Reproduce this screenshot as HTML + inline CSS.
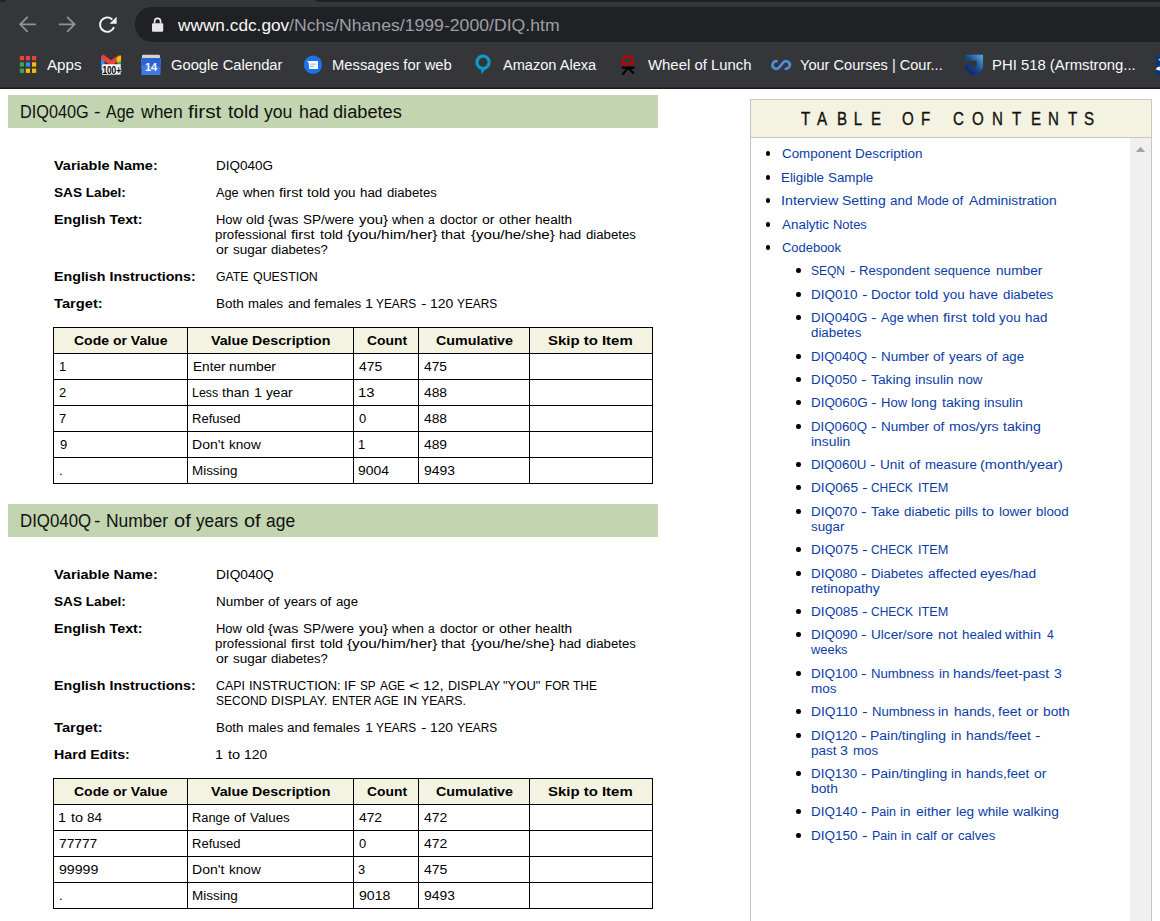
<!DOCTYPE html>
<html><head><meta charset="utf-8">
<style>
html,body{margin:0;padding:0;width:1160px;height:921px;overflow:hidden;background:#fff;font-family:"Liberation Sans",sans-serif;}
.t{position:absolute;white-space:nowrap;transform-origin:0 0;}
.abs{position:absolute;}
#chrome{position:absolute;left:0;top:0;width:1160px;height:89px;background:#35363a;}
#tabstrip{position:absolute;left:315px;top:0;width:845px;height:2px;background:#202124;border-bottom-left-radius:3px;}
#omni{position:absolute;left:135px;top:7px;width:1100px;height:34.5px;background:#202124;border-radius:17px;}
#shadow{position:absolute;left:0;top:87px;width:1160px;height:1px;background:#26272a;border-bottom:1px solid #1b1b1c;}
.green{position:absolute;left:8px;width:650px;height:33px;background:#c2d5b0;}
.tbl{position:absolute;left:53px;width:598px;border:1px solid #000;}
.hl{position:absolute;left:0;width:598px;height:1px;background:#000;}
.vl{position:absolute;top:0;width:1px;background:#000;}
.hdr{position:absolute;left:0;top:0;width:598px;height:25px;background:#f4f2e0;}
#toc{position:absolute;left:750px;top:99px;width:400px;height:830px;border:1px solid #c6c6c6;background:#fff;}
#tochead{position:absolute;left:0;top:0;width:400px;height:37px;background:#f4f2e0;border-bottom:1px solid #c6c6c6;}
#scroll{position:absolute;left:379px;top:38px;width:21px;height:800px;background:#f0f0f0;}
.bul{position:absolute;width:4.6px;height:4.6px;border-radius:50%;background:#000;}
.toct{position:absolute;top:109px;font-size:18px;line-height:20px;color:#111;white-space:nowrap;transform:scaleX(0.84);transform-origin:50% 0;-webkit-text-stroke:0.35px #111;}
</style></head><body>
<div id="chrome">
  <div id="tabstrip"></div>
  <div class="abs" style="left:0;top:0;width:6px;height:2px;background:#202124;border-bottom-right-radius:3px"></div>
  <div id="omni"></div>
  <svg class="abs" style="left:0;top:0" width="1160" height="89" viewBox="0 0 1160 89">
    <!-- back / forward -->
    <path d="M35.2 24.3H20.6M27.2 17.3L20.2 24.3L27.2 31.3" fill="none" stroke="#909194" stroke-width="1.8" stroke-linecap="round"/>
    <path d="M59.6 24.3H74.2M67.6 17.3L74.6 24.3L67.6 31.3" fill="none" stroke="#909194" stroke-width="1.8" stroke-linecap="round"/>
    <!-- reload -->
    <path d="M114.0 27.1A7.2 7.2 0 1 1 112.3 19.5" fill="none" stroke="#f1f3f4" stroke-width="1.9"/>
    <path d="M116.6 16.7V23.8H109.5Z" fill="#f1f3f4"/>
    <!-- lock -->
    <path d="M154.6 23.6V21.4a3 3 0 0 1 6 0v2.2" fill="none" stroke="#e8e8e8" stroke-width="1.6"/>
    <rect x="152" y="23.2" width="11.2" height="8.6" rx="1" fill="#e8e8e8"/>
    <!-- apps -->
    <g>
    <rect x="19.8" y="56" width="4.2" height="4.3" fill="#ea4335"/><rect x="25.8" y="56" width="4.2" height="4.3" fill="#ea4335"/><rect x="32" y="56" width="4.2" height="4.3" fill="#ea4335"/>
    <rect x="19.8" y="62.3" width="4.2" height="4.3" fill="#34a853"/><rect x="25.8" y="62.3" width="4.2" height="4.3" fill="#4285f4"/><rect x="32" y="62.3" width="4.2" height="4.3" fill="#fbbc04"/>
    <rect x="19.8" y="68.6" width="4.2" height="4.3" fill="#34a853"/><rect x="25.8" y="68.6" width="4.2" height="4.3" fill="#fbbc04"/><rect x="32" y="68.6" width="4.2" height="4.3" fill="#fbbc04"/>
    </g>
    <!-- gmail -->
    <clipPath id="gmc"><rect x="101" y="54.8" width="20.2" height="20"/></clipPath>
    <g clip-path="url(#gmc)">
    <path d="M101 58V70H104.6V61z" fill="#4285f4"/>
    <path d="M117.4 61V69H121.2V58z" fill="#34a853"/>
    <path d="M101.6 56.2L111.3 63.2L119.5 57.2" fill="none" stroke="#ea4335" stroke-width="4.6" stroke-linejoin="round"/>
    <path d="M116.4 58.4L119.4 55.6Q121.2 54.6 121.2 57V60.4L117.6 63z" fill="#fbbc04"/>
    </g>
    <rect x="102.3" y="64.2" width="18.3" height="10.4" fill="#f0f0f0"/>
    <text x="102.4" y="73.9" font-family="Liberation Sans" font-weight="bold" font-size="11.5" textLength="18.6" lengthAdjust="spacingAndGlyphs" fill="#000" stroke="#fff" stroke-width="1.2" paint-order="stroke">100+</text>
    <!-- calendar -->
    <rect x="142" y="54.8" width="18" height="3.6" rx="1.2" fill="#d6d3cc"/>
    <path d="M141 57.9H161L160.4 74.9H141.6z" fill="#3d7be6"/>
    <path d="M141.6 57.9H160.4V66.5L141.6 65z" fill="#2a62d4"/>
    <text x="151" y="71.2" font-family="Liberation Sans" font-weight="bold" font-size="11" text-anchor="middle" fill="#f4f6fb">14</text>
    <!-- messages -->
    <circle cx="313" cy="64.8" r="9.2" fill="#1a73e8"/>
    <path d="M306.9 61H318V69.1H309.3L308.6 62.6z" fill="#fff"/>
    <rect x="310" y="63.6" width="6.2" height="1.1" fill="#9cbff8"/><rect x="310" y="65.8" width="4.6" height="1.1" fill="#9cbff8"/>
    <!-- alexa -->
    <circle cx="483" cy="62.3" r="6.1" fill="none" stroke="#0d9ac9" stroke-width="3.2"/>
    <path d="M480.8 67.2L481.6 74.6L485.4 68.8z" fill="#0d9ac9"/>
    <!-- wheel of lunch -->
    <path d="M622.4 64.2C623 59.5 625 56.2 628.2 56.2S632.6 58.4 632.6 61.6V64.2z" fill="none" stroke="#c00000" stroke-width="2.2"/>
    <path d="M622.4 67.6H633.8M628 67.6L623.2 73.8M628 67.6L633.2 73" fill="none" stroke="#000" stroke-width="2.1" stroke-linecap="round"/>
    <!-- coursera -->
    <path d="M777.58 61.48A3.75 3.75 0 1 0 779.17 67.41L783.13 62.59A3.75 3.75 0 1 1 784.72 68.52" fill="none" stroke="#4d8fd6" stroke-width="2.7"/>
    <!-- PHI -->
    <defs><linearGradient id="g1" x1="0" y1="1" x2="1" y2="0"><stop offset="0" stop-color="#061a5c"/><stop offset="0.5" stop-color="#17488f"/><stop offset="1" stop-color="#5aaedd"/></linearGradient></defs>
    <path d="M965 54.8H983V67.8L977.8 74.8H970.2L965 67.8V64H970.4V64.6A3.2 3.2 0 0 0 976.8 64.6V60.6H965z" fill="url(#g1)"/>
    <rect x="1156" y="55" width="4" height="20" fill="#003a7d"/><path d="M1158.6 59.6Q1159.2 58.6 1160 58.8V60.6Q1159.2 60.2 1158.6 60.4z" fill="#dfe6ef"/><path d="M1156 68.6Q1157.6 66.4 1160 66.4V70.4Q1157.6 70.6 1156 69.6z" fill="#eef2f7"/>
  </svg>
  <div id="shadow"></div>
</div>

<div class="green" style="top:95px"></div>
<div class="green" style="top:504px"></div>

<!-- table 1 -->
<div class="tbl" style="top:327px;height:155px">
  <div class="hdr"></div>
  <div class="hl" style="top:25px"></div><div class="hl" style="top:51px"></div><div class="hl" style="top:77px"></div><div class="hl" style="top:103px"></div><div class="hl" style="top:129px"></div>
  <div class="vl" style="left:133px;height:155px"></div><div class="vl" style="left:299px;height:155px"></div><div class="vl" style="left:364px;height:155px"></div><div class="vl" style="left:475px;height:155px"></div>
</div>
<!-- table 2 -->
<div class="tbl" style="top:778px;height:129px">
  <div class="hdr"></div>
  <div class="hl" style="top:25px"></div><div class="hl" style="top:51px"></div><div class="hl" style="top:77px"></div><div class="hl" style="top:103px"></div>
  <div class="vl" style="left:133px;height:129px"></div><div class="vl" style="left:299px;height:129px"></div><div class="vl" style="left:364px;height:129px"></div><div class="vl" style="left:475px;height:129px"></div>
</div>

<!-- TOC -->
<div id="toc">
  <div id="tochead"></div>
  <div id="scroll"><svg class="abs" style="left:5px;top:8px" width="12" height="8" viewBox="0 0 12 8"><path d="M1 6.1L5.6 0.7L10.2 6.1z" fill="#a3a3a3"/></svg></div>
</div>
<div class="toct" style="left:799.5px">T</div>
<div class="toct" style="left:816px">A</div>
<div class="toct" style="left:835.5px">B</div>
<div class="toct" style="left:853px">L</div>
<div class="toct" style="left:870px">E</div>
<div class="toct" style="left:901px">O</div>
<div class="toct" style="left:920px">F</div>
<div class="toct" style="left:952px">C</div>
<div class="toct" style="left:970.5px">O</div>
<div class="toct" style="left:990.5px">N</div>
<div class="toct" style="left:1011px">T</div>
<div class="toct" style="left:1029.5px">E</div>
<div class="toct" style="left:1046.5px">N</div>
<div class="toct" style="left:1067px">T</div>
<div class="toct" style="left:1083px">S</div>
<div class="bul" style="left:765.9px;top:151.4px"></div>
<div class="bul" style="left:765.9px;top:175.4px"></div>
<div class="bul" style="left:765.9px;top:198.4px"></div>
<div class="bul" style="left:765.9px;top:222.4px"></div>
<div class="bul" style="left:765.9px;top:245.4px"></div>
<div class="bul" style="left:796.0px;top:268.4px"></div>
<div class="bul" style="left:796.0px;top:292.4px"></div>
<div class="bul" style="left:796.0px;top:315.4px"></div>
<div class="bul" style="left:796.0px;top:354.4px"></div>
<div class="bul" style="left:796.0px;top:377.4px"></div>
<div class="bul" style="left:796.0px;top:400.4px"></div>
<div class="bul" style="left:796.0px;top:424.4px"></div>
<div class="bul" style="left:796.0px;top:462.4px"></div>
<div class="bul" style="left:796.0px;top:485.4px"></div>
<div class="bul" style="left:796.0px;top:509.4px"></div>
<div class="bul" style="left:796.0px;top:547.4px"></div>
<div class="bul" style="left:796.0px;top:571.4px"></div>
<div class="bul" style="left:796.0px;top:609.4px"></div>
<div class="bul" style="left:796.0px;top:632.4px"></div>
<div class="bul" style="left:796.0px;top:671.4px"></div>
<div class="bul" style="left:796.0px;top:709.4px"></div>
<div class="bul" style="left:796.0px;top:733.4px"></div>
<div class="bul" style="left:796.0px;top:771.4px"></div>
<div class="bul" style="left:796.0px;top:809.4px"></div>
<div class="bul" style="left:796.0px;top:833.4px"></div>
<div class="t" style="left:177.596px;top:15.300px;font-size:17px;line-height:21px;color:#f8f9fa;transform:scaleX(1.01476);">wwwn.cdc.gov</div>
<div class="t" style="left:288.855px;top:15.300px;font-size:17px;line-height:21px;color:#9aa0a6;transform:scaleX(1.03759);">/Nchs/Nhanes/1999-2000/DIQ.htm</div>
<div class="t" style="left:47.050px;top:55.000px;font-size:15.5px;line-height:19px;color:#f8f9fa;transform:scaleX(0.97877);">Apps</div>
<div class="t" style="left:170.905px;top:55.000px;font-size:15.5px;line-height:19px;color:#f8f9fa;transform:scaleX(0.95124);">Google Calendar</div>
<div class="t" style="left:332.314px;top:55.000px;font-size:15.5px;line-height:19px;color:#f8f9fa;transform:scaleX(0.95215);">Messages for web</div>
<div class="t" style="left:503.065px;top:55.000px;font-size:15.5px;line-height:19px;color:#f8f9fa;transform:scaleX(0.94051);">Amazon Alexa</div>
<div class="t" style="left:647.681px;top:55.000px;font-size:15.5px;line-height:19px;color:#f8f9fa;transform:scaleX(0.96169);">Wheel of Lunch</div>
<div class="t" style="left:799.851px;top:55.000px;font-size:15.5px;line-height:19px;color:#f8f9fa;transform:scaleX(0.94096);">Your Courses | Cour...</div>
<div class="t" style="left:992.308px;top:55.000px;font-size:15.5px;line-height:19px;color:#f8f9fa;transform:scaleX(0.95894);">PHI 518 (Armstrong...</div>
<div class="t" style="left:19.845px;top:101.000px;font-size:18px;line-height:22px;color:#111;transform:scaleX(0.90280);">DIQ040G</div>
<div class="t" style="left:94.305px;top:101.000px;font-size:18px;line-height:22px;color:#111;transform:scaleX(1.08000);">-</div>
<div class="t" style="left:106.204px;top:101.000px;font-size:18px;line-height:22px;color:#111;transform:scaleX(0.88705);">Age</div>
<div class="t" style="left:141.039px;top:101.000px;font-size:18px;line-height:22px;color:#111;transform:scaleX(0.97201);">when</div>
<div class="t" style="left:188.433px;top:101.000px;font-size:18px;line-height:22px;color:#111;transform:scaleX(1.14949);">first</div>
<div class="t" style="left:227.508px;top:101.000px;font-size:18px;line-height:22px;color:#111;transform:scaleX(1.06367);">told</div>
<div class="t" style="left:264.069px;top:101.000px;font-size:18px;line-height:22px;color:#111;transform:scaleX(0.97730);">you</div>
<div class="t" style="left:298.698px;top:101.000px;font-size:18px;line-height:22px;color:#111;transform:scaleX(0.99203);">had</div>
<div class="t" style="left:332.536px;top:101.000px;font-size:18px;line-height:22px;color:#111;transform:scaleX(1.01064);">diabetes</div>
<div class="t" style="left:53.888px;top:158.700px;font-size:12px;line-height:15px;color:#000;font-weight:bold;transform:scaleX(1.20514);">Variable Name:</div>
<div class="t" style="left:215.587px;top:158.700px;font-size:12px;line-height:15px;color:#000;transform:scaleX(1.12270);">DIQ040G</div>
<div class="t" style="left:53.564px;top:185.700px;font-size:12px;line-height:15px;color:#000;font-weight:bold;transform:scaleX(1.13442);">SAS Label:</div>
<div class="t" style="left:215.997px;top:185.700px;font-size:12px;line-height:15px;color:#000;transform:scaleX(1.05823);">Age</div>
<div class="t" style="left:243.219px;top:185.700px;font-size:12px;line-height:15px;color:#000;transform:scaleX(1.10009);">when</div>
<div class="t" style="left:279.235px;top:185.700px;font-size:12px;line-height:15px;color:#000;transform:scaleX(1.22668);">first</div>
<div class="t" style="left:307.023px;top:185.700px;font-size:12px;line-height:15px;color:#000;transform:scaleX(1.18701);">told</div>
<div class="t" style="left:334.122px;top:185.700px;font-size:12px;line-height:15px;color:#000;transform:scaleX(1.11209);">you</div>
<div class="t" style="left:359.919px;top:185.700px;font-size:12px;line-height:15px;color:#000;transform:scaleX(1.11302);">had</div>
<div class="t" style="left:386.842px;top:185.700px;font-size:12px;line-height:15px;color:#000;transform:scaleX(1.09931);">diabetes</div>
<div class="t" style="left:54.077px;top:212.700px;font-size:12px;line-height:15px;color:#000;font-weight:bold;transform:scaleX(1.19023);">English Text:</div>
<div class="t" style="left:215.687px;top:212.700px;font-size:12px;line-height:15px;color:#000;transform:scaleX(1.08058);">How</div>
<div class="t" style="left:245.559px;top:212.700px;font-size:12px;line-height:15px;color:#000;transform:scaleX(1.15289);">old</div>
<div class="t" style="left:268.202px;top:212.700px;font-size:12px;line-height:15px;color:#000;transform:scaleX(1.19543);">{was</div>
<div class="t" style="left:302.719px;top:212.700px;font-size:12px;line-height:15px;color:#000;transform:scaleX(1.12558);">SP/were</div>
<div class="t" style="left:358.652px;top:212.700px;font-size:12px;line-height:15px;color:#000;transform:scaleX(1.24509);">you}</div>
<div class="t" style="left:392.366px;top:212.700px;font-size:12px;line-height:15px;color:#000;transform:scaleX(1.11000);">when</div>
<div class="t" style="left:428.180px;top:212.700px;font-size:12px;line-height:15px;color:#000;transform:scaleX(0.99615);">a</div>
<div class="t" style="left:440.100px;top:212.700px;font-size:12px;line-height:15px;color:#000;transform:scaleX(1.12821);">doctor</div>
<div class="t" style="left:481.871px;top:212.700px;font-size:12px;line-height:15px;color:#000;transform:scaleX(1.17554);">or</div>
<div class="t" style="left:499.027px;top:212.700px;font-size:12px;line-height:15px;color:#000;transform:scaleX(1.16222);">other</div>
<div class="t" style="left:534.741px;top:212.700px;font-size:12px;line-height:15px;color:#000;transform:scaleX(1.13386);">health</div>
<div class="t" style="left:215.173px;top:227.700px;font-size:12px;line-height:15px;color:#000;transform:scaleX(1.10605);">professional</div>
<div class="t" style="left:291.118px;top:227.700px;font-size:12px;line-height:15px;color:#000;transform:scaleX(1.21908);">first</div>
<div class="t" style="left:319.635px;top:227.700px;font-size:12px;line-height:15px;color:#000;transform:scaleX(1.19339);">told</div>
<div class="t" style="left:346.709px;top:227.700px;font-size:12px;line-height:15px;color:#000;transform:scaleX(1.27842);">{you/him/her}</div>
<div class="t" style="left:441.391px;top:227.700px;font-size:12px;line-height:15px;color:#000;transform:scaleX(1.20288);">that</div>
<div class="t" style="left:470.789px;top:227.700px;font-size:12px;line-height:15px;color:#000;transform:scaleX(1.25380);">{you/he/she}</div>
<div class="t" style="left:559.105px;top:227.700px;font-size:12px;line-height:15px;color:#000;transform:scaleX(1.11284);">had</div>
<div class="t" style="left:585.815px;top:227.700px;font-size:12px;line-height:15px;color:#000;transform:scaleX(1.10044);">diabetes</div>
<div class="t" style="left:215.762px;top:242.700px;font-size:12px;line-height:15px;color:#000;transform:scaleX(1.17563);">or</div>
<div class="t" style="left:232.591px;top:242.700px;font-size:12px;line-height:15px;color:#000;transform:scaleX(1.12730);">sugar</div>
<div class="t" style="left:271.315px;top:242.700px;font-size:12px;line-height:15px;color:#000;transform:scaleX(1.09175);">diabetes?</div>
<div class="t" style="left:54.107px;top:269.700px;font-size:12px;line-height:15px;color:#000;font-weight:bold;transform:scaleX(1.18747);">English Instructions:</div>
<div class="t" style="left:215.669px;top:269.700px;font-size:12px;line-height:15px;color:#000;transform:scaleX(1.02026);">GATE</div>
<div class="t" style="left:252.523px;top:269.700px;font-size:12px;line-height:15px;color:#000;transform:scaleX(1.03295);">QUESTION</div>
<div class="t" style="left:54.340px;top:296.700px;font-size:12px;line-height:15px;color:#000;font-weight:bold;transform:scaleX(1.22456);">Target:</div>
<div class="t" style="left:215.593px;top:296.700px;font-size:12px;line-height:15px;color:#000;transform:scaleX(1.12016);">Both</div>
<div class="t" style="left:247.804px;top:296.700px;font-size:12px;line-height:15px;color:#000;transform:scaleX(1.09927);">males</div>
<div class="t" style="left:287.841px;top:296.700px;font-size:12px;line-height:15px;color:#000;transform:scaleX(1.12359);">and</div>
<div class="t" style="left:314.170px;top:296.700px;font-size:12px;line-height:15px;color:#000;transform:scaleX(1.12202);">females</div>
<div class="t" style="left:364.897px;top:296.700px;font-size:12px;line-height:15px;color:#000;transform:scaleX(1.20534);">1</div>
<div class="t" style="left:376.367px;top:296.700px;font-size:12px;line-height:15px;color:#000;transform:scaleX(0.98866);">YEARS</div>
<div class="t" style="left:421.241px;top:296.700px;font-size:12px;line-height:15px;color:#000;transform:scaleX(1.39770);">-</div>
<div class="t" style="left:430.254px;top:296.700px;font-size:12px;line-height:15px;color:#000;transform:scaleX(1.16242);">120</div>
<div class="t" style="left:457.168px;top:296.700px;font-size:12px;line-height:15px;color:#000;transform:scaleX(0.98866);">YEARS</div>
<div class="t" style="left:73.658px;top:333.800px;font-size:12px;line-height:15px;color:#000;font-weight:bold;transform:scaleX(1.16820);">Code or Value</div>
<div class="t" style="left:211.395px;top:333.800px;font-size:12px;line-height:15px;color:#000;font-weight:bold;transform:scaleX(1.18497);">Value Description</div>
<div class="t" style="left:366.687px;top:333.800px;font-size:12px;line-height:15px;color:#000;font-weight:bold;transform:scaleX(1.15552);">Count</div>
<div class="t" style="left:435.650px;top:333.800px;font-size:12px;line-height:15px;color:#000;font-weight:bold;transform:scaleX(1.19064);">Cumulative</div>
<div class="t" style="left:548.389px;top:333.800px;font-size:12px;line-height:15px;color:#000;font-weight:bold;transform:scaleX(1.24527);">Skip to Item</div>
<div class="t" style="left:58.969px;top:359.800px;font-size:12px;line-height:15px;color:#000;transform:scaleX(1.08000);">1</div>
<div class="t" style="left:192.592px;top:359.800px;font-size:12px;line-height:15px;color:#000;transform:scaleX(1.13795);">Enter</div>
<div class="t" style="left:229.368px;top:359.800px;font-size:12px;line-height:15px;color:#000;transform:scaleX(1.15444);">number</div>
<div class="t" style="left:359.318px;top:359.800px;font-size:12px;line-height:15px;color:#000;transform:scaleX(1.15214);">475</div>
<div class="t" style="left:424.271px;top:359.800px;font-size:12px;line-height:15px;color:#000;transform:scaleX(1.14794);">475</div>
<div class="t" style="left:58.906px;top:385.800px;font-size:12px;line-height:15px;color:#000;transform:scaleX(1.08000);">2</div>
<div class="t" style="left:191.874px;top:385.800px;font-size:12px;line-height:15px;color:#000;transform:scaleX(1.03431);">Less</div>
<div class="t" style="left:222.325px;top:385.800px;font-size:12px;line-height:15px;color:#000;transform:scaleX(1.16366);">than</div>
<div class="t" style="left:253.622px;top:385.800px;font-size:12px;line-height:15px;color:#000;transform:scaleX(1.20185);">1</div>
<div class="t" style="left:266.382px;top:385.800px;font-size:12px;line-height:15px;color:#000;transform:scaleX(1.14310);">year</div>
<div class="t" style="left:358.053px;top:385.800px;font-size:12px;line-height:15px;color:#000;transform:scaleX(1.24237);">13</div>
<div class="t" style="left:424.270px;top:385.800px;font-size:12px;line-height:15px;color:#000;transform:scaleX(1.15093);">488</div>
<div class="t" style="left:58.994px;top:411.800px;font-size:12px;line-height:15px;color:#000;transform:scaleX(1.08000);">7</div>
<div class="t" style="left:191.737px;top:411.800px;font-size:12px;line-height:15px;color:#000;transform:scaleX(1.08715);">Refused</div>
<div class="t" style="left:358.688px;top:411.800px;font-size:12px;line-height:15px;color:#000;transform:scaleX(1.08000);">0</div>
<div class="t" style="left:424.270px;top:411.800px;font-size:12px;line-height:15px;color:#000;transform:scaleX(1.15093);">488</div>
<div class="t" style="left:59.522px;top:437.800px;font-size:12px;line-height:15px;color:#000;transform:scaleX(1.08000);">9</div>
<div class="t" style="left:192.498px;top:437.800px;font-size:12px;line-height:15px;color:#000;transform:scaleX(1.16837);">Don&#x27;t</div>
<div class="t" style="left:228.628px;top:437.800px;font-size:12px;line-height:15px;color:#000;transform:scaleX(1.13121);">know</div>
<div class="t" style="left:358.469px;top:437.800px;font-size:12px;line-height:15px;color:#000;transform:scaleX(1.08000);">1</div>
<div class="t" style="left:424.272px;top:437.800px;font-size:12px;line-height:15px;color:#000;transform:scaleX(1.14937);">489</div>
<div class="t" style="left:59.219px;top:463.800px;font-size:12px;line-height:15px;color:#000;transform:scaleX(1.08000);">.</div>
<div class="t" style="left:191.644px;top:463.800px;font-size:12px;line-height:15px;color:#000;transform:scaleX(1.11729);">Missing</div>
<div class="t" style="left:357.914px;top:463.800px;font-size:12px;line-height:15px;color:#000;transform:scaleX(1.15722);">9004</div>
<div class="t" style="left:423.884px;top:463.800px;font-size:12px;line-height:15px;color:#000;transform:scaleX(1.15577);">9493</div>
<div class="t" style="left:19.537px;top:510.000px;font-size:18px;line-height:22px;color:#111;transform:scaleX(0.93510);">DIQ040Q</div>
<div class="t" style="left:94.305px;top:510.000px;font-size:18px;line-height:22px;color:#111;transform:scaleX(1.08000);">-</div>
<div class="t" style="left:106.235px;top:510.000px;font-size:18px;line-height:22px;color:#111;transform:scaleX(0.96758);">Number</div>
<div class="t" style="left:173.658px;top:510.000px;font-size:18px;line-height:22px;color:#111;transform:scaleX(1.11355);">of</div>
<div class="t" style="left:196.187px;top:510.000px;font-size:18px;line-height:22px;color:#111;transform:scaleX(0.95382);">years</div>
<div class="t" style="left:243.748px;top:510.000px;font-size:18px;line-height:22px;color:#111;transform:scaleX(1.10427);">of</div>
<div class="t" style="left:265.523px;top:510.000px;font-size:18px;line-height:22px;color:#111;transform:scaleX(0.96874);">age</div>
<div class="t" style="left:53.888px;top:567.700px;font-size:12px;line-height:15px;color:#000;font-weight:bold;transform:scaleX(1.20514);">Variable Name:</div>
<div class="t" style="left:215.567px;top:567.700px;font-size:12px;line-height:15px;color:#000;transform:scaleX(1.13898);">DIQ040Q</div>
<div class="t" style="left:53.564px;top:594.700px;font-size:12px;line-height:15px;color:#000;font-weight:bold;transform:scaleX(1.13442);">SAS Label:</div>
<div class="t" style="left:215.595px;top:594.700px;font-size:12px;line-height:15px;color:#000;transform:scaleX(1.12366);">Number</div>
<div class="t" style="left:267.687px;top:594.700px;font-size:12px;line-height:15px;color:#000;transform:scaleX(1.14130);">of</div>
<div class="t" style="left:283.566px;top:594.700px;font-size:12px;line-height:15px;color:#000;transform:scaleX(1.11425);">years</div>
<div class="t" style="left:320.401px;top:594.700px;font-size:12px;line-height:15px;color:#000;transform:scaleX(1.14130);">of</div>
<div class="t" style="left:336.363px;top:594.700px;font-size:12px;line-height:15px;color:#000;transform:scaleX(1.09828);">age</div>
<div class="t" style="left:54.077px;top:621.700px;font-size:12px;line-height:15px;color:#000;font-weight:bold;transform:scaleX(1.19023);">English Text:</div>
<div class="t" style="left:215.687px;top:621.700px;font-size:12px;line-height:15px;color:#000;transform:scaleX(1.08058);">How</div>
<div class="t" style="left:245.559px;top:621.700px;font-size:12px;line-height:15px;color:#000;transform:scaleX(1.15289);">old</div>
<div class="t" style="left:268.202px;top:621.700px;font-size:12px;line-height:15px;color:#000;transform:scaleX(1.19543);">{was</div>
<div class="t" style="left:302.719px;top:621.700px;font-size:12px;line-height:15px;color:#000;transform:scaleX(1.12558);">SP/were</div>
<div class="t" style="left:358.652px;top:621.700px;font-size:12px;line-height:15px;color:#000;transform:scaleX(1.24509);">you}</div>
<div class="t" style="left:392.366px;top:621.700px;font-size:12px;line-height:15px;color:#000;transform:scaleX(1.11000);">when</div>
<div class="t" style="left:428.180px;top:621.700px;font-size:12px;line-height:15px;color:#000;transform:scaleX(0.99615);">a</div>
<div class="t" style="left:440.100px;top:621.700px;font-size:12px;line-height:15px;color:#000;transform:scaleX(1.12821);">doctor</div>
<div class="t" style="left:481.871px;top:621.700px;font-size:12px;line-height:15px;color:#000;transform:scaleX(1.17554);">or</div>
<div class="t" style="left:499.027px;top:621.700px;font-size:12px;line-height:15px;color:#000;transform:scaleX(1.16222);">other</div>
<div class="t" style="left:534.741px;top:621.700px;font-size:12px;line-height:15px;color:#000;transform:scaleX(1.13386);">health</div>
<div class="t" style="left:215.173px;top:636.700px;font-size:12px;line-height:15px;color:#000;transform:scaleX(1.10605);">professional</div>
<div class="t" style="left:291.118px;top:636.700px;font-size:12px;line-height:15px;color:#000;transform:scaleX(1.21908);">first</div>
<div class="t" style="left:319.635px;top:636.700px;font-size:12px;line-height:15px;color:#000;transform:scaleX(1.19339);">told</div>
<div class="t" style="left:346.709px;top:636.700px;font-size:12px;line-height:15px;color:#000;transform:scaleX(1.27842);">{you/him/her}</div>
<div class="t" style="left:441.391px;top:636.700px;font-size:12px;line-height:15px;color:#000;transform:scaleX(1.20288);">that</div>
<div class="t" style="left:470.789px;top:636.700px;font-size:12px;line-height:15px;color:#000;transform:scaleX(1.25380);">{you/he/she}</div>
<div class="t" style="left:559.105px;top:636.700px;font-size:12px;line-height:15px;color:#000;transform:scaleX(1.11284);">had</div>
<div class="t" style="left:585.815px;top:636.700px;font-size:12px;line-height:15px;color:#000;transform:scaleX(1.10044);">diabetes</div>
<div class="t" style="left:215.762px;top:651.700px;font-size:12px;line-height:15px;color:#000;transform:scaleX(1.17563);">or</div>
<div class="t" style="left:232.591px;top:651.700px;font-size:12px;line-height:15px;color:#000;transform:scaleX(1.12730);">sugar</div>
<div class="t" style="left:271.315px;top:651.700px;font-size:12px;line-height:15px;color:#000;transform:scaleX(1.09175);">diabetes?</div>
<div class="t" style="left:54.107px;top:678.700px;font-size:12px;line-height:15px;color:#000;font-weight:bold;transform:scaleX(1.18747);">English Instructions:</div>
<div class="t" style="left:215.666px;top:678.700px;font-size:12px;line-height:15px;color:#000;transform:scaleX(1.03327);">CAPI</div>
<div class="t" style="left:248.654px;top:678.700px;font-size:12px;line-height:15px;color:#000;transform:scaleX(1.07397);">INSTRUCTION:</div>
<div class="t" style="left:344.217px;top:678.700px;font-size:12px;line-height:15px;color:#000;transform:scaleX(1.11912);">IF</div>
<div class="t" style="left:360.136px;top:678.700px;font-size:12px;line-height:15px;color:#000;transform:scaleX(0.97836);">SP</div>
<div class="t" style="left:380.208px;top:678.700px;font-size:12px;line-height:15px;color:#000;transform:scaleX(0.98633);">AGE</div>
<div class="t" style="left:409.400px;top:678.700px;font-size:12px;line-height:15px;color:#000;transform:scaleX(1.47904);">&lt;</div>
<div class="t" style="left:423.323px;top:678.700px;font-size:12px;line-height:15px;color:#000;transform:scaleX(1.24254);">12,</div>
<div class="t" style="left:447.726px;top:678.700px;font-size:12px;line-height:15px;color:#000;transform:scaleX(1.04898);">DISPLAY</div>
<div class="t" style="left:503.312px;top:678.700px;font-size:12px;line-height:15px;color:#000;transform:scaleX(1.08440);">&quot;YOU&quot;</div>
<div class="t" style="left:544.830px;top:678.700px;font-size:12px;line-height:15px;color:#000;transform:scaleX(0.97227);">FOR</div>
<div class="t" style="left:572.890px;top:678.700px;font-size:12px;line-height:15px;color:#000;transform:scaleX(0.99586);">THE</div>
<div class="t" style="left:216.077px;top:693.700px;font-size:12px;line-height:15px;color:#000;transform:scaleX(0.99812);">SECOND</div>
<div class="t" style="left:271.435px;top:693.700px;font-size:12px;line-height:15px;color:#000;transform:scaleX(1.09469);">DISPLAY.</div>
<div class="t" style="left:331.543px;top:693.700px;font-size:12px;line-height:15px;color:#000;transform:scaleX(0.96734);">ENTER</div>
<div class="t" style="left:374.475px;top:693.700px;font-size:12px;line-height:15px;color:#000;transform:scaleX(0.97069);">AGE</div>
<div class="t" style="left:403.237px;top:693.700px;font-size:12px;line-height:15px;color:#000;transform:scaleX(1.17479);">IN</div>
<div class="t" style="left:421.364px;top:693.700px;font-size:12px;line-height:15px;color:#000;transform:scaleX(1.02089);">YEARS.</div>
<div class="t" style="left:54.340px;top:720.700px;font-size:12px;line-height:15px;color:#000;font-weight:bold;transform:scaleX(1.22456);">Target:</div>
<div class="t" style="left:215.597px;top:720.700px;font-size:12px;line-height:15px;color:#000;transform:scaleX(1.11230);">Both</div>
<div class="t" style="left:247.567px;top:720.700px;font-size:12px;line-height:15px;color:#000;transform:scaleX(1.10115);">males</div>
<div class="t" style="left:287.305px;top:720.700px;font-size:12px;line-height:15px;color:#000;transform:scaleX(1.12214);">and</div>
<div class="t" style="left:313.470px;top:720.700px;font-size:12px;line-height:15px;color:#000;transform:scaleX(1.11807);">females</div>
<div class="t" style="left:364.757px;top:720.700px;font-size:12px;line-height:15px;color:#000;transform:scaleX(1.20391);">1</div>
<div class="t" style="left:376.247px;top:720.700px;font-size:12px;line-height:15px;color:#000;transform:scaleX(0.98677);">YEARS</div>
<div class="t" style="left:420.652px;top:720.700px;font-size:12px;line-height:15px;color:#000;transform:scaleX(1.39743);">-</div>
<div class="t" style="left:429.808px;top:720.700px;font-size:12px;line-height:15px;color:#000;transform:scaleX(1.14712);">120</div>
<div class="t" style="left:457.429px;top:720.700px;font-size:12px;line-height:15px;color:#000;transform:scaleX(0.98677);">YEARS</div>
<div class="t" style="left:54.113px;top:747.700px;font-size:12px;line-height:15px;color:#000;font-weight:bold;transform:scaleX(1.18488);">Hard Edits:</div>
<div class="t" style="left:215.361px;top:747.700px;font-size:12px;line-height:15px;color:#000;transform:scaleX(1.20420);">1</div>
<div class="t" style="left:227.885px;top:747.700px;font-size:12px;line-height:15px;color:#000;transform:scaleX(1.20861);">to</div>
<div class="t" style="left:244.296px;top:747.700px;font-size:12px;line-height:15px;color:#000;transform:scaleX(1.15227);">120</div>
<div class="t" style="left:73.658px;top:784.800px;font-size:12px;line-height:15px;color:#000;font-weight:bold;transform:scaleX(1.16820);">Code or Value</div>
<div class="t" style="left:211.395px;top:784.800px;font-size:12px;line-height:15px;color:#000;font-weight:bold;transform:scaleX(1.18497);">Value Description</div>
<div class="t" style="left:366.687px;top:784.800px;font-size:12px;line-height:15px;color:#000;font-weight:bold;transform:scaleX(1.15552);">Count</div>
<div class="t" style="left:435.650px;top:784.800px;font-size:12px;line-height:15px;color:#000;font-weight:bold;transform:scaleX(1.19064);">Cumulative</div>
<div class="t" style="left:548.389px;top:784.800px;font-size:12px;line-height:15px;color:#000;font-weight:bold;transform:scaleX(1.24527);">Skip to Item</div>
<div class="t" style="left:58.492px;top:810.800px;font-size:12px;line-height:15px;color:#000;transform:scaleX(1.20522);">1</div>
<div class="t" style="left:70.805px;top:810.800px;font-size:12px;line-height:15px;color:#000;transform:scaleX(1.20780);">to</div>
<div class="t" style="left:86.972px;top:810.800px;font-size:12px;line-height:15px;color:#000;transform:scaleX(1.12684);">84</div>
<div class="t" style="left:191.772px;top:810.800px;font-size:12px;line-height:15px;color:#000;transform:scaleX(1.06932);">Range</div>
<div class="t" style="left:234.171px;top:810.800px;font-size:12px;line-height:15px;color:#000;transform:scaleX(1.14377);">of</div>
<div class="t" style="left:250.127px;top:810.800px;font-size:12px;line-height:15px;color:#000;transform:scaleX(1.11125);">Values</div>
<div class="t" style="left:359.318px;top:810.800px;font-size:12px;line-height:15px;color:#000;transform:scaleX(1.15108);">472</div>
<div class="t" style="left:424.254px;top:810.800px;font-size:12px;line-height:15px;color:#000;transform:scaleX(1.16625);">472</div>
<div class="t" style="left:58.754px;top:836.800px;font-size:12px;line-height:15px;color:#000;transform:scaleX(1.14704);">77777</div>
<div class="t" style="left:191.737px;top:836.800px;font-size:12px;line-height:15px;color:#000;transform:scaleX(1.08715);">Refused</div>
<div class="t" style="left:358.688px;top:836.800px;font-size:12px;line-height:15px;color:#000;transform:scaleX(1.08000);">0</div>
<div class="t" style="left:424.254px;top:836.800px;font-size:12px;line-height:15px;color:#000;transform:scaleX(1.16625);">472</div>
<div class="t" style="left:59.422px;top:862.800px;font-size:12px;line-height:15px;color:#000;transform:scaleX(1.17644);">99999</div>
<div class="t" style="left:192.498px;top:862.800px;font-size:12px;line-height:15px;color:#000;transform:scaleX(1.16837);">Don&#x27;t</div>
<div class="t" style="left:228.628px;top:862.800px;font-size:12px;line-height:15px;color:#000;transform:scaleX(1.13121);">know</div>
<div class="t" style="left:357.965px;top:862.800px;font-size:12px;line-height:15px;color:#000;transform:scaleX(1.08000);">3</div>
<div class="t" style="left:424.276px;top:862.800px;font-size:12px;line-height:15px;color:#000;transform:scaleX(1.16535);">475</div>
<div class="t" style="left:59.219px;top:888.800px;font-size:12px;line-height:15px;color:#000;transform:scaleX(1.08000);">.</div>
<div class="t" style="left:191.610px;top:888.800px;font-size:12px;line-height:15px;color:#000;transform:scaleX(1.12376);">Missing</div>
<div class="t" style="left:358.891px;top:888.800px;font-size:12px;line-height:15px;color:#000;transform:scaleX(1.17300);">9018</div>
<div class="t" style="left:423.884px;top:888.800px;font-size:12px;line-height:15px;color:#000;transform:scaleX(1.15577);">9493</div>
<div class="t" style="left:781.546px;top:147.000px;font-size:12px;line-height:15px;color:#0b3ca5;transform:scaleX(1.11493);">Component</div>
<div class="t" style="left:854.599px;top:147.000px;font-size:12px;line-height:15px;color:#0b3ca5;transform:scaleX(1.12551);">Description</div>
<div class="t" style="left:780.663px;top:171.000px;font-size:12px;line-height:15px;color:#0b3ca5;transform:scaleX(1.11250);">Eligible</div>
<div class="t" style="left:827.630px;top:171.000px;font-size:12px;line-height:15px;color:#0b3ca5;transform:scaleX(1.11299);">Sample</div>
<div class="t" style="left:780.627px;top:194.000px;font-size:12px;line-height:15px;color:#0b3ca5;transform:scaleX(1.19286);">Interview</div>
<div class="t" style="left:841.675px;top:194.000px;font-size:12px;line-height:15px;color:#0b3ca5;transform:scaleX(1.16941);">Setting</div>
<div class="t" style="left:889.987px;top:194.000px;font-size:12px;line-height:15px;color:#0b3ca5;transform:scaleX(1.12282);">and</div>
<div class="t" style="left:916.846px;top:194.000px;font-size:12px;line-height:15px;color:#0b3ca5;transform:scaleX(1.05978);">Mode</div>
<div class="t" style="left:952.031px;top:194.000px;font-size:12px;line-height:15px;color:#0b3ca5;transform:scaleX(1.13765);">of</div>
<div class="t" style="left:968.731px;top:194.000px;font-size:12px;line-height:15px;color:#0b3ca5;transform:scaleX(1.15287);">Administration</div>
<div class="t" style="left:782.029px;top:218.000px;font-size:12px;line-height:15px;color:#0b3ca5;transform:scaleX(1.11883);">Analytic</div>
<div class="t" style="left:833.488px;top:218.000px;font-size:12px;line-height:15px;color:#0b3ca5;transform:scaleX(1.07994);">Notes</div>
<div class="t" style="left:781.624px;top:241.000px;font-size:12px;line-height:15px;color:#0b3ca5;transform:scaleX(1.07940);">Codebook</div>
<div class="t" style="left:811.031px;top:264.000px;font-size:12px;line-height:15px;color:#0b3ca5;transform:scaleX(1.00019);">SEQN</div>
<div class="t" style="left:849.639px;top:264.000px;font-size:12px;line-height:15px;color:#0b3ca5;transform:scaleX(1.39356);">-</div>
<div class="t" style="left:859.425px;top:264.000px;font-size:12px;line-height:15px;color:#0b3ca5;transform:scaleX(1.09600);">Respondent</div>
<div class="t" style="left:933.717px;top:264.000px;font-size:12px;line-height:15px;color:#0b3ca5;transform:scaleX(1.08535);">sequence</div>
<div class="t" style="left:995.599px;top:264.000px;font-size:12px;line-height:15px;color:#0b3ca5;transform:scaleX(1.14054);">number</div>
<div class="t" style="left:810.582px;top:288.000px;font-size:12px;line-height:15px;color:#0b3ca5;transform:scaleX(1.12669);">DIQ010</div>
<div class="t" style="left:861.553px;top:288.000px;font-size:12px;line-height:15px;color:#0b3ca5;transform:scaleX(1.39887);">-</div>
<div class="t" style="left:871.292px;top:288.000px;font-size:12px;line-height:15px;color:#0b3ca5;transform:scaleX(1.12693);">Doctor</div>
<div class="t" style="left:914.805px;top:288.000px;font-size:12px;line-height:15px;color:#0b3ca5;transform:scaleX(1.20264);">told</div>
<div class="t" style="left:942.589px;top:288.000px;font-size:12px;line-height:15px;color:#0b3ca5;transform:scaleX(1.11927);">you</div>
<div class="t" style="left:969.045px;top:288.000px;font-size:12px;line-height:15px;color:#0b3ca5;transform:scaleX(1.10599);">have</div>
<div class="t" style="left:1002.604px;top:288.000px;font-size:12px;line-height:15px;color:#0b3ca5;transform:scaleX(1.10754);">diabetes</div>
<div class="t" style="left:810.674px;top:311.000px;font-size:12px;line-height:15px;color:#0b3ca5;transform:scaleX(1.11072);">DIQ040G</div>
<div class="t" style="left:870.549px;top:311.000px;font-size:12px;line-height:15px;color:#0b3ca5;transform:scaleX(1.39459);">-</div>
<div class="t" style="left:880.705px;top:311.000px;font-size:12px;line-height:15px;color:#0b3ca5;transform:scaleX(1.06520);">Age</div>
<div class="t" style="left:907.498px;top:311.000px;font-size:12px;line-height:15px;color:#0b3ca5;transform:scaleX(1.10636);">when</div>
<div class="t" style="left:943.289px;top:311.000px;font-size:12px;line-height:15px;color:#0b3ca5;transform:scaleX(1.23217);">first</div>
<div class="t" style="left:971.659px;top:311.000px;font-size:12px;line-height:15px;color:#0b3ca5;transform:scaleX(1.19655);">told</div>
<div class="t" style="left:999.311px;top:311.000px;font-size:12px;line-height:15px;color:#0b3ca5;transform:scaleX(1.11673);">you</div>
<div class="t" style="left:1024.668px;top:311.000px;font-size:12px;line-height:15px;color:#0b3ca5;transform:scaleX(1.11612);">had</div>
<div class="t" style="left:811.068px;top:326.000px;font-size:12px;line-height:15px;color:#0b3ca5;transform:scaleX(1.10908);">diabetes</div>
<div class="t" style="left:810.695px;top:350.000px;font-size:12px;line-height:15px;color:#0b3ca5;transform:scaleX(1.10510);">DIQ040Q</div>
<div class="t" style="left:871.041px;top:350.000px;font-size:12px;line-height:15px;color:#0b3ca5;transform:scaleX(1.40205);">-</div>
<div class="t" style="left:881.066px;top:350.000px;font-size:12px;line-height:15px;color:#0b3ca5;transform:scaleX(1.12395);">Number</div>
<div class="t" style="left:933.206px;top:350.000px;font-size:12px;line-height:15px;color:#0b3ca5;transform:scaleX(1.14159);">of</div>
<div class="t" style="left:949.054px;top:350.000px;font-size:12px;line-height:15px;color:#0b3ca5;transform:scaleX(1.11454);">years</div>
<div class="t" style="left:985.935px;top:350.000px;font-size:12px;line-height:15px;color:#0b3ca5;transform:scaleX(1.14159);">of</div>
<div class="t" style="left:1001.807px;top:350.000px;font-size:12px;line-height:15px;color:#0b3ca5;transform:scaleX(1.09856);">age</div>
<div class="t" style="left:810.662px;top:373.000px;font-size:12px;line-height:15px;color:#0b3ca5;transform:scaleX(1.11163);">DIQ050</div>
<div class="t" style="left:861.394px;top:373.000px;font-size:12px;line-height:15px;color:#0b3ca5;transform:scaleX(1.38513);">-</div>
<div class="t" style="left:870.961px;top:373.000px;font-size:12px;line-height:15px;color:#0b3ca5;transform:scaleX(1.15092);">Taking</div>
<div class="t" style="left:915.250px;top:373.000px;font-size:12px;line-height:15px;color:#0b3ca5;transform:scaleX(1.13006);">insulin</div>
<div class="t" style="left:957.646px;top:373.000px;font-size:12px;line-height:15px;color:#0b3ca5;transform:scaleX(1.10623);">now</div>
<div class="t" style="left:810.648px;top:396.000px;font-size:12px;line-height:15px;color:#0b3ca5;transform:scaleX(1.11569);">DIQ060G</div>
<div class="t" style="left:871.268px;top:396.000px;font-size:12px;line-height:15px;color:#0b3ca5;transform:scaleX(1.40081);">-</div>
<div class="t" style="left:880.505px;top:396.000px;font-size:12px;line-height:15px;color:#0b3ca5;transform:scaleX(1.08529);">How</div>
<div class="t" style="left:911.279px;top:396.000px;font-size:12px;line-height:15px;color:#0b3ca5;transform:scaleX(1.13607);">long</div>
<div class="t" style="left:941.757px;top:396.000px;font-size:12px;line-height:15px;color:#0b3ca5;transform:scaleX(1.18121);">taking</div>
<div class="t" style="left:983.818px;top:396.000px;font-size:12px;line-height:15px;color:#0b3ca5;transform:scaleX(1.13989);">insulin</div>
<div class="t" style="left:810.708px;top:420.000px;font-size:12px;line-height:15px;color:#0b3ca5;transform:scaleX(1.10368);">DIQ060Q</div>
<div class="t" style="left:870.862px;top:420.000px;font-size:12px;line-height:15px;color:#0b3ca5;transform:scaleX(1.39812);">-</div>
<div class="t" style="left:880.864px;top:420.000px;font-size:12px;line-height:15px;color:#0b3ca5;transform:scaleX(1.12655);">Number</div>
<div class="t" style="left:932.855px;top:420.000px;font-size:12px;line-height:15px;color:#0b3ca5;transform:scaleX(1.13967);">of</div>
<div class="t" style="left:948.887px;top:420.000px;font-size:12px;line-height:15px;color:#0b3ca5;transform:scaleX(1.18368);">mos/yrs</div>
<div class="t" style="left:1002.702px;top:420.000px;font-size:12px;line-height:15px;color:#0b3ca5;transform:scaleX(1.18218);">taking</div>
<div class="t" style="left:810.923px;top:435.000px;font-size:12px;line-height:15px;color:#0b3ca5;transform:scaleX(1.15558);">insulin</div>
<div class="t" style="left:810.701px;top:458.000px;font-size:12px;line-height:15px;color:#0b3ca5;transform:scaleX(1.10701);">DIQ060U</div>
<div class="t" style="left:869.752px;top:458.000px;font-size:12px;line-height:15px;color:#0b3ca5;transform:scaleX(1.39210);">-</div>
<div class="t" style="left:879.570px;top:458.000px;font-size:12px;line-height:15px;color:#0b3ca5;transform:scaleX(1.13871);">Unit</div>
<div class="t" style="left:908.744px;top:458.000px;font-size:12px;line-height:15px;color:#0b3ca5;transform:scaleX(1.13346);">of</div>
<div class="t" style="left:924.537px;top:458.000px;font-size:12px;line-height:15px;color:#0b3ca5;transform:scaleX(1.10953);">measure</div>
<div class="t" style="left:979.925px;top:458.000px;font-size:12px;line-height:15px;color:#0b3ca5;transform:scaleX(1.21904);">(month/year)</div>
<div class="t" style="left:810.571px;top:481.000px;font-size:12px;line-height:15px;color:#0b3ca5;transform:scaleX(1.13801);">DIQ065</div>
<div class="t" style="left:861.981px;top:481.000px;font-size:12px;line-height:15px;color:#0b3ca5;transform:scaleX(1.40776);">-</div>
<div class="t" style="left:871.439px;top:481.000px;font-size:12px;line-height:15px;color:#0b3ca5;transform:scaleX(0.99495);">CHECK</div>
<div class="t" style="left:918.195px;top:481.000px;font-size:12px;line-height:15px;color:#0b3ca5;transform:scaleX(1.05607);">ITEM</div>
<div class="t" style="left:810.598px;top:505.000px;font-size:12px;line-height:15px;color:#0b3ca5;transform:scaleX(1.11750);">DIQ070</div>
<div class="t" style="left:861.478px;top:505.000px;font-size:12px;line-height:15px;color:#0b3ca5;transform:scaleX(1.39008);">-</div>
<div class="t" style="left:871.140px;top:505.000px;font-size:12px;line-height:15px;color:#0b3ca5;transform:scaleX(1.12793);">Take</div>
<div class="t" style="left:904.497px;top:505.000px;font-size:12px;line-height:15px;color:#0b3ca5;transform:scaleX(1.11455);">diabetic</div>
<div class="t" style="left:955.358px;top:505.000px;font-size:12px;line-height:15px;color:#0b3ca5;transform:scaleX(1.11345);">pills</div>
<div class="t" style="left:982.111px;top:505.000px;font-size:12px;line-height:15px;color:#0b3ca5;transform:scaleX(1.20034);">to</div>
<div class="t" style="left:998.805px;top:505.000px;font-size:12px;line-height:15px;color:#0b3ca5;transform:scaleX(1.13103);">lower</div>
<div class="t" style="left:1035.974px;top:505.000px;font-size:12px;line-height:15px;color:#0b3ca5;transform:scaleX(1.11113);">blood</div>
<div class="t" style="left:810.918px;top:520.000px;font-size:12px;line-height:15px;color:#0b3ca5;transform:scaleX(1.11008);">sugar</div>
<div class="t" style="left:810.571px;top:543.000px;font-size:12px;line-height:15px;color:#0b3ca5;transform:scaleX(1.13801);">DIQ075</div>
<div class="t" style="left:861.981px;top:543.000px;font-size:12px;line-height:15px;color:#0b3ca5;transform:scaleX(1.40776);">-</div>
<div class="t" style="left:871.439px;top:543.000px;font-size:12px;line-height:15px;color:#0b3ca5;transform:scaleX(0.99495);">CHECK</div>
<div class="t" style="left:918.195px;top:543.000px;font-size:12px;line-height:15px;color:#0b3ca5;transform:scaleX(1.05607);">ITEM</div>
<div class="t" style="left:810.587px;top:567.000px;font-size:12px;line-height:15px;color:#0b3ca5;transform:scaleX(1.12057);">DIQ080</div>
<div class="t" style="left:861.227px;top:567.000px;font-size:12px;line-height:15px;color:#0b3ca5;transform:scaleX(1.39382);">-</div>
<div class="t" style="left:871.043px;top:567.000px;font-size:12px;line-height:15px;color:#0b3ca5;transform:scaleX(1.10227);">Diabetes</div>
<div class="t" style="left:927.576px;top:567.000px;font-size:12px;line-height:15px;color:#0b3ca5;transform:scaleX(1.14342);">affected</div>
<div class="t" style="left:980.164px;top:567.000px;font-size:12px;line-height:15px;color:#0b3ca5;transform:scaleX(1.15463);">eyes/had</div>
<div class="t" style="left:811.023px;top:582.000px;font-size:12px;line-height:15px;color:#0b3ca5;transform:scaleX(1.15587);">retinopathy</div>
<div class="t" style="left:810.579px;top:605.000px;font-size:12px;line-height:15px;color:#0b3ca5;transform:scaleX(1.13551);">DIQ085</div>
<div class="t" style="left:861.790px;top:605.000px;font-size:12px;line-height:15px;color:#0b3ca5;transform:scaleX(1.40442);">-</div>
<div class="t" style="left:871.217px;top:605.000px;font-size:12px;line-height:15px;color:#0b3ca5;transform:scaleX(0.99867);">CHECK</div>
<div class="t" style="left:917.799px;top:605.000px;font-size:12px;line-height:15px;color:#0b3ca5;transform:scaleX(1.05417);">ITEM</div>
<div class="t" style="left:810.583px;top:628.000px;font-size:12px;line-height:15px;color:#0b3ca5;transform:scaleX(1.12338);">DIQ090</div>
<div class="t" style="left:861.159px;top:628.000px;font-size:12px;line-height:15px;color:#0b3ca5;transform:scaleX(1.39605);">-</div>
<div class="t" style="left:870.970px;top:628.000px;font-size:12px;line-height:15px;color:#0b3ca5;transform:scaleX(1.13589);">Ulcer/sore</div>
<div class="t" style="left:937.652px;top:628.000px;font-size:12px;line-height:15px;color:#0b3ca5;transform:scaleX(1.16070);">not</div>
<div class="t" style="left:961.867px;top:628.000px;font-size:12px;line-height:15px;color:#0b3ca5;transform:scaleX(1.10543);">healed</div>
<div class="t" style="left:1005.494px;top:628.000px;font-size:12px;line-height:15px;color:#0b3ca5;transform:scaleX(1.17388);">within</div>
<div class="t" style="left:1046.776px;top:628.000px;font-size:12px;line-height:15px;color:#0b3ca5;transform:scaleX(1.01674);">4</div>
<div class="t" style="left:811.388px;top:643.000px;font-size:12px;line-height:15px;color:#0b3ca5;transform:scaleX(1.07465);">weeks</div>
<div class="t" style="left:810.584px;top:667.000px;font-size:12px;line-height:15px;color:#0b3ca5;transform:scaleX(1.12417);">DIQ100</div>
<div class="t" style="left:861.419px;top:667.000px;font-size:12px;line-height:15px;color:#0b3ca5;transform:scaleX(1.39548);">-</div>
<div class="t" style="left:871.250px;top:667.000px;font-size:12px;line-height:15px;color:#0b3ca5;transform:scaleX(1.09846);">Numbness</div>
<div class="t" style="left:938.568px;top:667.000px;font-size:12px;line-height:15px;color:#0b3ca5;transform:scaleX(1.11374);">in</div>
<div class="t" style="left:953.362px;top:667.000px;font-size:12px;line-height:15px;color:#0b3ca5;transform:scaleX(1.16312);">hands/feet-past</div>
<div class="t" style="left:1054.400px;top:667.000px;font-size:12px;line-height:15px;color:#0b3ca5;transform:scaleX(1.17914);">3</div>
<div class="t" style="left:811.062px;top:682.000px;font-size:12px;line-height:15px;color:#0b3ca5;transform:scaleX(1.12480);">mos</div>
<div class="t" style="left:810.565px;top:705.000px;font-size:12px;line-height:15px;color:#0b3ca5;transform:scaleX(1.14888);">DIQ110</div>
<div class="t" style="left:861.693px;top:705.000px;font-size:12px;line-height:15px;color:#0b3ca5;transform:scaleX(1.39820);">-</div>
<div class="t" style="left:871.561px;top:705.000px;font-size:12px;line-height:15px;color:#0b3ca5;transform:scaleX(1.09588);">Numbness</div>
<div class="t" style="left:938.229px;top:705.000px;font-size:12px;line-height:15px;color:#0b3ca5;transform:scaleX(1.11440);">in</div>
<div class="t" style="left:954.126px;top:705.000px;font-size:12px;line-height:15px;color:#0b3ca5;transform:scaleX(1.13579);">hands,</div>
<div class="t" style="left:998.153px;top:705.000px;font-size:12px;line-height:15px;color:#0b3ca5;transform:scaleX(1.16662);">feet</div>
<div class="t" style="left:1026.348px;top:705.000px;font-size:12px;line-height:15px;color:#0b3ca5;transform:scaleX(1.14832);">or</div>
<div class="t" style="left:1042.942px;top:705.000px;font-size:12px;line-height:15px;color:#0b3ca5;transform:scaleX(1.14482);">both</div>
<div class="t" style="left:810.639px;top:729.000px;font-size:12px;line-height:15px;color:#0b3ca5;transform:scaleX(1.11953);">DIQ120</div>
<div class="t" style="left:860.877px;top:729.000px;font-size:12px;line-height:15px;color:#0b3ca5;transform:scaleX(1.38470);">-</div>
<div class="t" style="left:870.380px;top:729.000px;font-size:12px;line-height:15px;color:#0b3ca5;transform:scaleX(1.16191);">Pain/tingling</div>
<div class="t" style="left:950.726px;top:729.000px;font-size:12px;line-height:15px;color:#0b3ca5;transform:scaleX(1.10516);">in</div>
<div class="t" style="left:966.037px;top:729.000px;font-size:12px;line-height:15px;color:#0b3ca5;transform:scaleX(1.15694);">hands/feet</div>
<div class="t" style="left:1035.397px;top:729.000px;font-size:12px;line-height:15px;color:#0b3ca5;transform:scaleX(1.38470);">-</div>
<div class="t" style="left:811.133px;top:744.000px;font-size:12px;line-height:15px;color:#0b3ca5;transform:scaleX(1.12667);">past</div>
<div class="t" style="left:840.489px;top:744.000px;font-size:12px;line-height:15px;color:#0b3ca5;transform:scaleX(1.18617);">3</div>
<div class="t" style="left:853.213px;top:744.000px;font-size:12px;line-height:15px;color:#0b3ca5;transform:scaleX(1.11167);">mos</div>
<div class="t" style="left:810.648px;top:767.000px;font-size:12px;line-height:15px;color:#0b3ca5;transform:scaleX(1.11508);">DIQ130</div>
<div class="t" style="left:861.305px;top:767.000px;font-size:12px;line-height:15px;color:#0b3ca5;transform:scaleX(1.39002);">-</div>
<div class="t" style="left:870.802px;top:767.000px;font-size:12px;line-height:15px;color:#0b3ca5;transform:scaleX(1.16655);">Pain/tingling</div>
<div class="t" style="left:950.857px;top:767.000px;font-size:12px;line-height:15px;color:#0b3ca5;transform:scaleX(1.10578);">in</div>
<div class="t" style="left:966.338px;top:767.000px;font-size:12px;line-height:15px;color:#0b3ca5;transform:scaleX(1.12954);">hands,feet</div>
<div class="t" style="left:1033.737px;top:767.000px;font-size:12px;line-height:15px;color:#0b3ca5;transform:scaleX(1.16839);">or</div>
<div class="t" style="left:811.095px;top:782.000px;font-size:12px;line-height:15px;color:#0b3ca5;transform:scaleX(1.14687);">both</div>
<div class="t" style="left:810.583px;top:805.000px;font-size:12px;line-height:15px;color:#0b3ca5;transform:scaleX(1.12468);">DIQ140</div>
<div class="t" style="left:861.447px;top:805.000px;font-size:12px;line-height:15px;color:#0b3ca5;transform:scaleX(1.39611);">-</div>
<div class="t" style="left:871.394px;top:805.000px;font-size:12px;line-height:15px;color:#0b3ca5;transform:scaleX(1.04466);">Pain</div>
<div class="t" style="left:900.436px;top:805.000px;font-size:12px;line-height:15px;color:#0b3ca5;transform:scaleX(1.11240);">in</div>
<div class="t" style="left:916.298px;top:805.000px;font-size:12px;line-height:15px;color:#0b3ca5;transform:scaleX(1.16469);">either</div>
<div class="t" style="left:955.511px;top:805.000px;font-size:12px;line-height:15px;color:#0b3ca5;transform:scaleX(1.12993);">leg</div>
<div class="t" style="left:977.606px;top:805.000px;font-size:12px;line-height:15px;color:#0b3ca5;transform:scaleX(1.13026);">while</div>
<div class="t" style="left:1012.715px;top:805.000px;font-size:12px;line-height:15px;color:#0b3ca5;transform:scaleX(1.14351);">walking</div>
<div class="t" style="left:810.581px;top:829.000px;font-size:12px;line-height:15px;color:#0b3ca5;transform:scaleX(1.12791);">DIQ150</div>
<div class="t" style="left:861.645px;top:829.000px;font-size:12px;line-height:15px;color:#0b3ca5;transform:scaleX(1.39695);">-</div>
<div class="t" style="left:871.622px;top:829.000px;font-size:12px;line-height:15px;color:#0b3ca5;transform:scaleX(1.03844);">Pain</div>
<div class="t" style="left:900.771px;top:829.000px;font-size:12px;line-height:15px;color:#0b3ca5;transform:scaleX(1.11340);">in</div>
<div class="t" style="left:916.294px;top:829.000px;font-size:12px;line-height:15px;color:#0b3ca5;transform:scaleX(1.10457);">calf</div>
<div class="t" style="left:941.494px;top:829.000px;font-size:12px;line-height:15px;color:#0b3ca5;transform:scaleX(1.14785);">or</div>
<div class="t" style="left:957.705px;top:829.000px;font-size:12px;line-height:15px;color:#0b3ca5;transform:scaleX(1.09459);">calves</div>
</body></html>
